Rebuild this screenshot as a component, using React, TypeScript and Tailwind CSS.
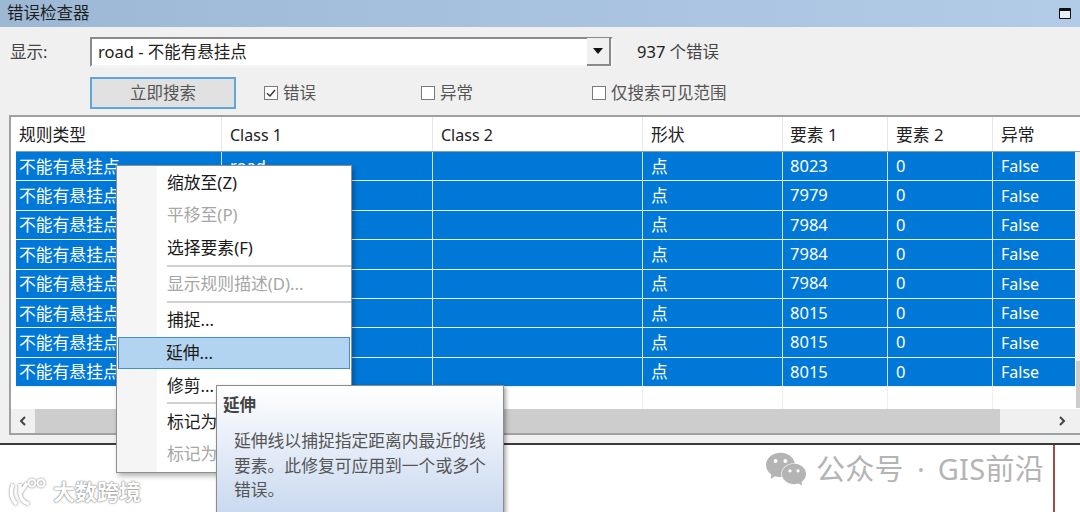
import { SiWechat } from "react-icons/si";

const font = { fontFamily: '"Noto Sans", "Noto Sans CJK SC", sans-serif' };
const cols = [
  { w: "w-[205px]", pad: "pl-[3px]", head: "规则类型", hs: "text-[16.8px]" },
  { w: "w-[211px]", pad: "pl-[8px]", head: "Class 1", hs: "text-[16px]" },
  { w: "w-[210px]", pad: "pl-[8px]", head: "Class 2", hs: "text-[16px]" },
  { w: "w-[140px]", pad: "pl-[8px]", head: "形状", hs: "text-[16.8px]" },
  { w: "w-[105px]", pad: "pl-[7px]", head: "要素 1", hs: "text-[16.8px]" },
  { w: "w-[105px]", pad: "pl-[8px]", head: "要素 2", hs: "text-[16.8px]" },
  { w: "w-[83px]", pad: "pl-[8px]", head: "异常", hs: "text-[16.8px]" },
];
const ids = ["8023", "7979", "7984", "7984", "7984", "8015", "8015", "8015"];

function MenuItem({ y, children, off, hot }: { y: string; children: React.ReactNode; off?: boolean; hot?: boolean }) {
  return (
    <div className={`${y} flex items-center text-[16.8px] ${off ? "text-[#a6a6a6]" : "text-[#1a1a1a]"} ${hot ? "bg-[#b3d4f0] border border-[#3d8fd1] mx-[1px] pl-[47px]" : "pl-[50px]"}`}>
      {children}
    </div>
  );
}
function Sep() {
  return <div className="h-[2px] ml-[50px] bg-[#d0d0d0]" />;
}
function Box({ checked }: { checked?: boolean }) {
  return (
    <span className="w-[14px] h-[14px] border border-[#7a7a7a] bg-white flex items-center justify-center">
      {checked && (
        <svg width="12" height="12" viewBox="0 0 12 12" fill="none" stroke="#333" strokeWidth="1.4">
          <path d="M2 6.2 L5 9 L10 3" />
        </svg>
      )}
    </span>
  );
}

export default function App() {
  return (
    <div style={font} className="relative w-[1080px] h-[512px] overflow-hidden bg-white flex flex-col text-[16.5px] text-[#222]">
      {/* title */}
      <div className="h-[27px] shrink-0 bg-gradient-to-r from-[#9db8d5] to-[#b2cce8] flex items-center justify-between pl-[7px] pr-[9px] text-[#1f1f1f]">
        <span>错误检查器</span>
        <span className="w-[12px] h-[11px] border border-[#111] border-t-[3px] bg-[#e8eef6] rounded-[1px]" />
      </div>

      {/* panel */}
      <div className="h-[416px] shrink-0 bg-[#f0f0f0] flex flex-col pl-[9px]">
        <div className="h-[50px] shrink-0 flex items-center pt-[1px]">
          <span className="w-[81px] pl-[1px] text-[#444]">显示:</span>
          <div className="w-[523px] h-[30px] bg-white border-2 border-t-[#8a8a8a] border-l-[#8a8a8a] border-r-[#f5f5f5] border-b-[#f5f5f5] flex items-center justify-between relative -top-[1px]">
            <span className="pl-[6px] pt-[1px] text-[16.5px] text-[#222]">road - 不能有悬挂点</span>
            <span className="w-[24px] h-[28px] bg-[#f0f0f0] border-r-2 border-b-2 border-[#8a8a8a] flex items-center justify-center">
              <svg width="10" height="6" viewBox="0 0 10 6"><path d="M0 0H10L5 6Z" fill="#111" /></svg>
            </span>
          </div>
          <span className="ml-[24px] text-[#444]"><span className="text-[#222]">937</span> 个错误</span>
        </div>
        <div className="h-[32px] shrink-0 flex items-center">
          <div className="ml-[81px] w-[146px] h-[32px] bg-[#e1e1e1] border-2 border-[#5fa6dc] flex items-center justify-center text-[#555]">
            立即搜索
          </div>
          <div className="ml-[28px] flex items-center gap-[5px] text-[#555]"><Box checked />错误</div>
          <div className="ml-[105px] flex items-center gap-[5px] text-[#555]"><Box />异常</div>
          <div className="ml-[119px] flex items-center gap-[5px] text-[#555]"><Box />仅搜索可见范围</div>
        </div>

        {/* table */}
        <div className="mt-[6px] h-[320px] shrink-0 bg-white border-t-2 border-l-2 border-b-2 border-[#a0a0a0] flex flex-col pl-[5px]">
          <div className="h-[35px] shrink-0 flex border-b border-[#7f9db9]">
            {cols.map((c, i) => (
              <div key={c.head} className={`${c.w} ${c.pad} ${c.hs} pt-[1px] shrink-0 flex items-center ${i ? "border-l border-[#e8e8e8]" : ""}`}>{c.head}</div>
            ))}
          </div>
          {ids.map((id, r) => (
            <div key={r} className="h-[29.4px] shrink-0 flex border-b border-[#e8f2fb] text-white">
              {[`不能有悬挂点`, "road", "", "点", id, "0", "False"].map((t, i) => (
                <div key={i} className={`${cols[i].w} ${cols[i].pad} ${i === 0 || i === 3 ? "text-[16.8px]" : i === 6 ? "text-[16px]" : "text-[16.5px]"} shrink-0 flex items-center bg-[#0078d7] ${i ? "border-l border-[#cfe3f5]" : ""}`}>{t}</div>
              ))}
            </div>
          ))}
          <div className="h-[22px] shrink-0 flex">
            {cols.map((c, i) => (
              <div key={c.head} className={`${c.w} shrink-0 ${i ? "border-l border-[#eeeeee]" : ""}`} />
            ))}
          </div>
          <div className="h-[24px] shrink-0 -ml-[5px] bg-[#f0f0f0] flex items-center">
            <span className="w-[24px] flex justify-center">
              <svg width="8" height="10" viewBox="0 0 8 10" fill="none" stroke="#444" strokeWidth="2"><path d="M6 1 L2 5 L6 9" /></svg>
            </span>
            <span className="w-[965px] h-full bg-[#cdcdcd]" />
            <span className="w-[66px] flex justify-end">
              <svg width="8" height="10" viewBox="0 0 8 10" fill="none" stroke="#444" strokeWidth="2"><path d="M2 1 L6 5 L2 9" /></svg>
            </span>
          </div>
        </div>
      </div>

      {/* lower map area */}
      <div className="flex-1 border-t-2 border-[#3a3a3a] bg-white" />

      {/* vertical scrollbar sliver */}
      <div className="absolute left-[1076px] top-[152px] w-[4px] h-[256px] bg-[#f0f0f0]">
        <div className="mt-[209px] h-[47px] bg-[#cdcdcd]" />
      </div>
      {/* map line */}
      <div className="absolute left-[1053px] top-[445px] w-[2px] h-[67px] bg-[#a04a4a]" />

      {/* context menu */}
      <div className="absolute left-[116px] top-[165px] w-[236px] h-[308px] bg-white border border-[#8f8f8f] shadow-[2px_3px_5px_rgba(0,0,0,0.3)] flex flex-col">
        <div className="absolute left-0 top-0 bottom-0 w-[40px] bg-[#f5f5f5]" />
        <div className="relative flex flex-col">
          <MenuItem y="h-[33px]">缩放至(Z)</MenuItem>
          <MenuItem y="h-[32px]" off>平移至(P)</MenuItem>
          <MenuItem y="h-[34px]">选择要素(F)</MenuItem>
          <Sep />
          <MenuItem y="h-[34px]" off>显示规则描述(D)...</MenuItem>
          <Sep />
          <MenuItem y="h-[34px]">捕捉...</MenuItem>
          <MenuItem y="h-[32px]" hot>延伸...</MenuItem>
          <MenuItem y="h-[33px]">修剪...</MenuItem>
          <Sep />
          <MenuItem y="h-[35px]">标记为异常(E)</MenuItem>
          <MenuItem y="h-[30px]" off>标记为错误(R)</MenuItem>
        </div>
      </div>

      {/* tooltip */}
      <div className="absolute left-[216px] top-[385px] w-[288px] h-[140px] bg-gradient-to-b from-white to-[#c5d6ee] border border-[#8c8c8c] shadow-[2px_2px_4px_rgba(0,0,0,0.35)] text-[#555] pl-[6px]">
        <div className="pt-[7px] h-[39px] font-bold text-[#444] text-[16.5px]">延伸</div>
        <div className="pl-[11px] w-[272px] text-[16.8px] leading-[24.5px] pt-[4px]">
          延伸线以捕捉指定距离内最近的线要素。此修复可应用到一个或多个错误。
        </div>
      </div>

      {/* watermarks */}
      <div className="absolute left-[8px] top-[475px] flex items-center gap-[5px] text-white [text-shadow:0_0_2px_#777,0_0_1px_#777]">
        <svg width="40" height="30" viewBox="0 0 40 30" fill="none" stroke="#fff" strokeWidth="3.5" style={{ filter: "drop-shadow(0 0 1px #777)" }}>
          <path d="M5 7 C2 14 3 23 9 27 M12 7 V17 C13 23 17 26 21 27 M13 15 L19 6" />
          <circle cx="24" cy="6" r="3.5" strokeWidth="2" />
          <circle cx="33" cy="6" r="3.5" strokeWidth="2" />
        </svg>
        <span className="text-[22px] font-bold">大数跨境</span>
      </div>
      <div className="absolute left-[766px] top-[447px] flex items-center text-[#b4b4b4]">
        <SiWechat size={40} />
        <span className="ml-[10px] text-[29px] tracking-[0.3px]">公众号</span>
        <span className="mx-[13px] text-[29px]">·</span>
        <span className="text-[29px] tracking-[0.3px]">GIS前沿</span>
      </div>
    </div>
  );
}
